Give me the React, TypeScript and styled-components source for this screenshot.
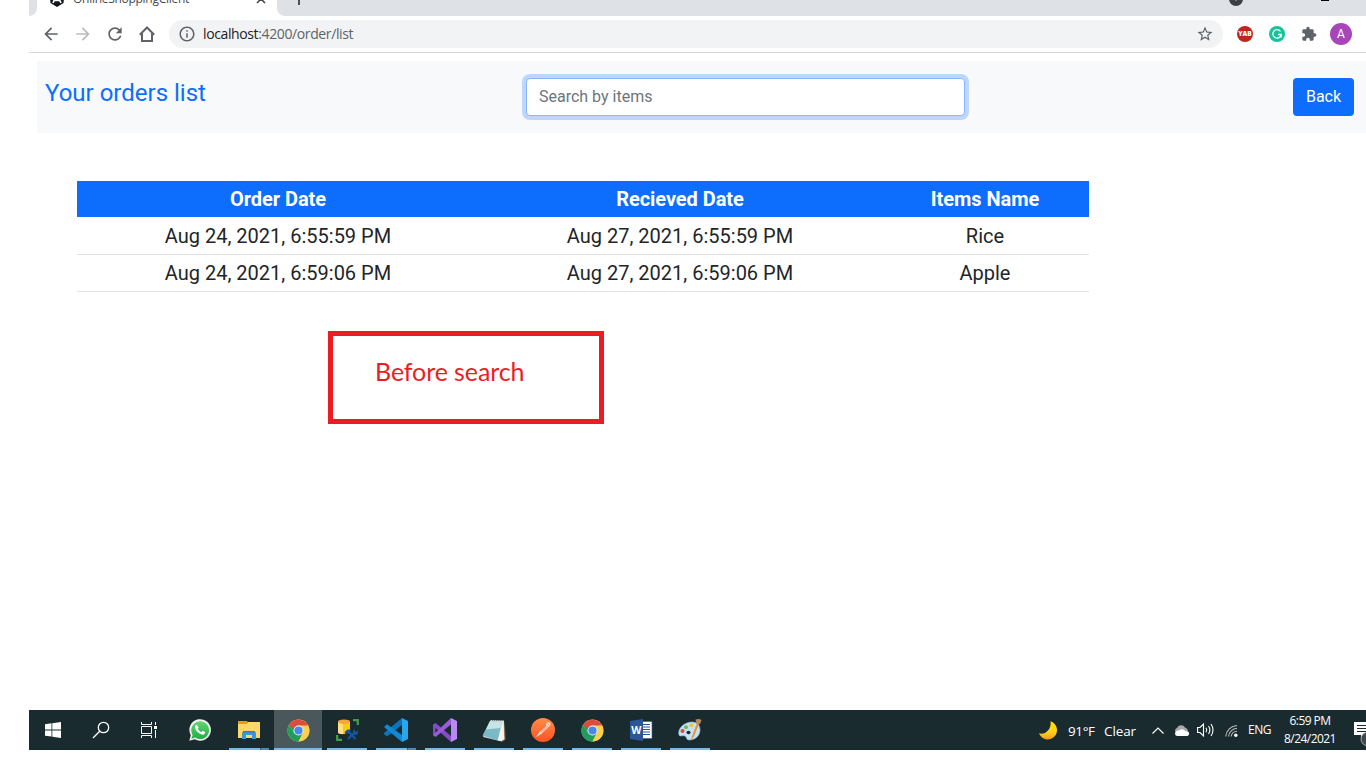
import React from "react";
import styled, { createGlobalStyle } from "styled-components";

const GlobalStyle = createGlobalStyle`
  *, *::before, *::after { box-sizing: border-box; }
  html, body { margin: 0; padding: 0; background: #fff; }
  body { width: 1366px; height: 768px; overflow: hidden; font-family: Roboto, sans-serif; color: #212529; }
  svg { display: block; flex: none; overflow: visible; }
`;

const uiFont = `"Open Sans", "Noto Sans", sans-serif`;

const Screen = styled.div`
  display: flex;
  flex-direction: column;
  width: 1366px;
  height: 768px;
  padding-left: 29px;
  overflow: hidden;
  background: #fff;
`;

/* ---------- browser chrome ---------- */

const TabStrip = styled.div`
  display: flex;
  align-items: flex-end;
  flex: none;
  height: 16px;
  overflow: hidden;
  background: #fff;
`;

const StripEdge = styled.div`
  width: 8px;
  height: 16px;
  background: #dee1e6;
  border-bottom-right-radius: 8px;
`;

const Tab = styled.div`
  display: flex;
  align-items: center;
  flex: none;
  width: 240px;
  height: 34px;
  padding: 0 10px 0 12px;
`;

const TabTitle = styled.span`
  flex: 1;
  margin-left: 8px;
  font: 12px/16px ${uiFont};
  letter-spacing: -0.28px;
  color: #45494d;
  white-space: nowrap;
`;

const StripRest = styled.div`
  display: flex;
  align-items: center;
  flex: 1;
  height: 34px;
  padding: 0 37px 0 15px;
  background: #dee1e6;
  border-bottom-left-radius: 8px;
`;

const Grow = styled.div`
  flex: 1;
`;

const TabSearch = styled.div`
  display: grid;
  place-items: center;
  width: 14px;
  height: 14px;
  margin-right: 78px;
  border-radius: 50%;
  background: #3c4043;
`;

const Minimize = styled.div`
  width: 8px;
  height: 1px;
  margin-top: 3px;
  background: #000;
`;

const Toolbar = styled.div`
  display: flex;
  align-items: center;
  flex: none;
  height: 37px;
  padding: 0 9px 0 6px;
  background: #fff;
  border-bottom: 1px solid #d8dade;
`;

const ToolCell = styled.div`
  display: grid;
  place-items: center;
  flex: none;
  width: 32px;
  height: 32px;
`;

const Omnibox = styled.div`
  display: flex;
  align-items: center;
  flex: 1;
  height: 28px;
  margin: 0 6px;
  padding: 0 9px;
  border-radius: 14px;
  background: #f1f3f4;
`;

const Url = styled.span`
  flex: 1;
  margin-left: 7px;
  font: 14px/20px ${uiFont};
  letter-spacing: -0.38px;
  color: #5f6368;
  b { font-weight: 400; color: #202124; }
`;

const Badge = styled.div<{ $size: number; $bg: string; $font: string }>`
  display: grid;
  place-items: center;
  width: ${(p) => p.$size}px;
  height: ${(p) => p.$size}px;
  border-radius: 50%;
  background: ${(p) => p.$bg};
  color: #fff;
  font: ${(p) => p.$font};
`;

/* ---------- page ---------- */

const Page = styled.main`
  display: flex;
  flex-direction: column;
  flex: none;
  height: 657px;
  padding: 8px 0 0 8px;
`;

const Navbar = styled.header`
  display: flex;
  align-items: flex-start;
  flex: none;
  height: 72px;
  padding: 17px 12px 0 8px;
  background: #f8f9fa;
`;

const PageTitle = styled.h1`
  width: 481px;
  margin: 0;
  font: 400 24px/31px Roboto, sans-serif;
  color: #0d6efd;
`;

const SearchInput = styled.input`
  width: 439px;
  height: 38px;
  padding: 0 12px 2px;
  border: 1px solid #86b7fe;
  border-radius: 4px;
  outline: 0;
  box-shadow: 0 0 0 4px rgba(13, 110, 253, 0.25);
  background: #fff;
  font: 16px/24px Roboto, sans-serif;
  &::placeholder { color: #6c757d; opacity: 1; }
`;

const BackButton = styled.button`
  width: 61px;
  height: 38px;
  margin-left: auto;
  padding: 0;
  border: 0;
  border-radius: 4px;
  background: #0d6efd;
  color: #fff;
  font: 16px/24px Roboto, sans-serif;
`;

const OrdersTable = styled.table`
  flex: none;
  width: 1012px;
  margin: 48px 0 0 40px;
  border-collapse: separate;
  border-spacing: 0;
  table-layout: fixed;
  font-size: 20px;
  line-height: 30px;
  text-align: center;
  th { height: 36px; padding: 0; background: #0d6efd; color: #fff; font-weight: 700; letter-spacing: -0.05px; }
  td { height: 37px; padding: 0; border-bottom: 1px solid #dee2e6; }
  tbody tr:first-child td { height: 38px; padding-top: 1px; }
`;

const Callout = styled.div`
  flex: none;
  width: 276px;
  height: 93px;
  margin: 39px 0 0 291px;
  padding: 19px 0 0 42px;
  border: 5px solid #ed1c24;
  font: 25px/32px Lato, sans-serif;
  letter-spacing: -0.1px;
  color: #ed1c24;
  white-space: nowrap;
`;

/* ---------- taskbar ---------- */

const Taskbar = styled.footer`
  display: flex;
  flex: none;
  height: 40px;
  background: #1a2b30;
  overflow: hidden;
`;

const TaskCell = styled.div<{ $active?: boolean }>`
  display: flex;
  flex-direction: column;
  align-items: center;
  flex: none;
  width: 48px;
  height: 40px;
  background: ${(p) => (p.$active ? "#4a585b" : "transparent")};
`;

const TaskIcon = styled.div`
  display: grid;
  place-items: center;
  flex: 1;
`;

const AppGroup = styled.div`
  display: flex;
  gap: 1px;
  margin-left: 3px;
  ${TaskCell} { padding-top: 2px; }
`;

const Indicator = styled.div<{ $kind?: "single" | "stacked" | "full" }>`
  flex: none;
  width: ${(p) => (p.$kind === "full" ? 48 : 40)}px;
  height: 2px;
  background: ${(p) =>
    !p.$kind
      ? "transparent"
      : p.$kind === "stacked"
        ? "linear-gradient(to right, #76b9ed 31px, #3c5d72 31px, #3c5d72 32px, #5287ae 32px)"
        : "#76b9ed"};
`;

const Tray = styled.div`
  display: flex;
  align-items: center;
  flex: none;
  width: 327px;
  margin-left: auto;
  color: #fff;
  font: 13px/18px ${uiFont};
  white-space: nowrap;
`;

const TrayText = styled.span<{ $width: number; $gap: number; $size?: number; $track?: number }>`
  flex: none;
  width: ${(p) => p.$width}px;
  margin-left: ${(p) => p.$gap}px;
  padding-top: ${(p) => (p.$size ? 0 : 2)}px;
  font-size: ${(p) => p.$size ?? 13.5}px;
  letter-spacing: ${(p) => p.$track ?? -0.1}px;
`;

const TrayIcon = styled.span<{ $gap: number }>`
  flex: none;
  margin-left: ${(p) => p.$gap}px;
`;

const Clock = styled.div`
  flex: none;
  width: 54px;
  margin-left: 11px;
  font-size: 12px;
  line-height: 18px;
  letter-spacing: -0.55px;
  text-align: center;
`;

const Glyph = ({ d, size = 20, color = "#5f6368" }: { d: string; size?: number; color?: string }) => (
  <svg width={size} height={size} viewBox="0 0 24 24" fill={color}>
    <path d={d} />
  </svg>
);

const paths = {
  back: "M20 11H7.83l5.59-5.59L12 4l-8 8 8 8 1.41-1.41L7.83 13H20v-2z",
  forward: "M4 11h12.17l-5.59-5.59L12 4l8 8-8 8-1.41-1.41L16.17 13H4v-2z",
  reload:
    "M17.65 6.35C16.2 4.9 14.21 4 12 4c-4.42 0-7.99 3.58-7.99 8s3.57 8 7.99 8c3.73 0 6.84-2.55 7.73-6h-2.08c-.82 2.33-3.04 4-5.65 4-3.31 0-6-2.69-6-6s2.69-6 6-6c1.66 0 3.14.69 4.22 1.78L13 11h7V4l-2.35 2.35z",
  info: "M11 7h2v2h-2zm0 4h2v6h-2zm1-9C6.48 2 2 6.48 2 12s4.48 10 10 10 10-4.480 10-10S17.520 2 12 2zm0 18c-4.410 0-8-3.590-8-8s3.590-8 8-8 8 3.590 8 8-3.590 8-8 8z",
  star: "M22 9.240l-7.190-.62L12 2 9.190 8.630 2 9.240l5.460 4.730L5.820 21 12 17.270 18.180 21l-1.630-7.030L22 9.240zM12 15.400l-3.760 2.270 1-4.280-3.320-2.880 4.380-.38L12 6.100l1.710 4.040 4.380.38-3.320 2.880 1 4.280L12 15.400z",
  puzzle:
    "M20.500 11H19V7c0-1.100-.9-2-2-2h-4V3.500C13 2.120 11.880 1 10.500 1S8 2.120 8 3.500V5H4c-1.100 0-1.990.9-1.990 2v3.800H3.500c1.490 0 2.700 1.210 2.700 2.700s-1.210 2.700-2.700 2.700H2V20c0 1.100.9 2 2 2h3.800v-1.500c0-1.490 1.210-2.700 2.700-2.700 1.490 0 2.700 1.210 2.700 2.700V22H17c1.100 0 2-.9 2-2v-4h1.500c1.380 0 2.500-1.120 2.500-2.500S21.880 11 20.500 11z",
};

const HomeIcon = () => (
  <svg width="16" height="16" viewBox="0 0 16 16" fill="none" stroke="#5f6368" strokeWidth="2">
    <path d="M.8 8.800 8 1.500l7.200 7.300M3 7.500V15h10V7.500" />
  </svg>
);

const Favicon = () => (
  <svg width="16" height="16" viewBox="0 0 16 16">
    <path d="M8 0 15.500 3 14.500 12 8 16 1.500 12 .5 3z" fill="#11151c" />
    <path d="M4 12 8 3l4 9M5.500 9.500h5" fill="none" stroke="#fff" strokeWidth="1.700" />
  </svg>
);

const WindowsLogo = () => (
  <svg width="16" height="16" viewBox="0 0 16 16" fill="#fff">
    <path d="M0 2.200 6.500 1.300v6.200H0zM7.300 1.200 16 0v7.500H7.300zM0 8.400h6.500v6.200L0 13.700zM7.300 8.400H16V16l-8.700-1.200z" />
  </svg>
);

const SearchGlyph = () => (
  <svg width="18" height="18" viewBox="0 0 18 18" fill="none" stroke="#fff" strokeWidth="1.300">
    <circle cx="11.500" cy="6.500" r="5.200" />
    <path d="M7.700 10.300 1 17" />
  </svg>
);

const TaskViewGlyph = () => (
  <svg width="16" height="16" viewBox="0 0 16 16" fill="none" stroke="#fff" strokeWidth="1">
    <path d="M.5 0v2.500h10V0M.5 16v-2.500h10V16M.5 4.500h10v7H.5zM14.500 0v3M14.500 8v8" />
    <path d="M13 4h3v3h-3z" fill="#fff" stroke="none" />
  </svg>
);

const WhatsApp = () => (
  <svg width="22" height="22" viewBox="0 0 22 22">
    <defs>
      <linearGradient id="wa" x1="0" y1="0" x2="0" y2="1">
        <stop offset="0" stopColor="#62d66e" />
        <stop offset="1" stopColor="#23ad48" />
      </linearGradient>
    </defs>
    <path d="M.3 21.800 1.800 16.300A10.800 10.800 0 1 1 5.800 20.300z" fill="#eef3ef" />
    <path d="M2.400 19.700 3.600 15.900A8.900 8.900 0 1 1 6.200 18.600z" fill="url(#wa)" />
    <path
      d="M7.600 5.800c-1.300.3-2 1.700-1.500 3.300.9 3 3.600 5.700 6.700 6.500 1.800.4 3.400-.5 3.300-2.500l-2.400-1.300-1.300 1.400c-1.700-.7-3-2-3.700-3.500l1-1.300z"
      fill="#fff"
    />
  </svg>
);

const Explorer = () => (
  <svg width="22" height="18" viewBox="0 0 22 18">
    <path d="M0 0h9l1 1.500V4H0z" fill="#e2a10b" />
    <path d="M0 3h9l1-2h12v16H0z" fill="#ffd869" />
    <path d="M4 18v-6l1.500-2h11l1.500 2v6h-4v-4H8v4z" fill="#3f97d7" />
    <path d="M5 10h12v1.500H5z" fill="#2f80bd" />
  </svg>
);

const Chrome = () => (
  <svg width="23" height="23" viewBox="0 0 48 48">
    <circle cx="24" cy="24" r="23" fill="#fcd04c" />
    <path d="M4.080 12.500A23 23 0 0 0 24 47L33.100 29.250 24 24 14.900 29.250z" fill="#1f9d5c" />
    <path d="M24 13.500h20A23 23 0 0 1 24 47l9.100-17.750z" fill="#fcd04c" />
    <path d="M4.080 12.500 14.900 29.250 24 24V13.500z" fill="#1f9d5c" />
    <path d="M4.080 12.500A23 23 0 0 1 44 13.500H24A10.500 10.500 0 0 0 13.800 22z" fill="#db4b3f" />
    <circle cx="24" cy="24" r="10.500" fill="#f1f1f1" />
    <circle cx="24" cy="24" r="8.500" fill="#4688f1" />
  </svg>
);

const DatabaseTool = () => (
  <svg width="23" height="22" viewBox="0 0 23 22">
    <path d="M2 2.500v11c0 1 3 2 6.500 1.500l5.500-3v-9.500z" fill="#fdc90c" />
    <path d="M2 2.500v11c0 1 3 1.500 5 1.500V4z" fill="#ffe27a" />
    <ellipse cx="8" cy="2.700" rx="6" ry="2.300" fill="#f4a63b" />
    <path d="M17 1.200h4.800V6M1.200 16v4.800H6" fill="none" stroke="#43a047" strokeWidth="2.200" />
    <path d="m12 20 6-6m-5-1 6.500 7" fill="none" stroke="#12599c" strokeWidth="2.200" />
    <path d="m8.500 13 3-2.500h3.500l-2.500 4.500-1.500-1-1.500 1zM17 12l2-2v2.500l1.500.5 1.500-2v3.500L20 16h-3z" fill="#12599c" />
  </svg>
);

const VsCode = () => (
  <svg width="24" height="24" viewBox="0 0 24 24">
    <path d="M18 0v7L3 18.500 0 16V15z" fill="#0a74bd" />
    <path d="M0 9 3 6.200 18 17v7L0 9z" fill="#1089d4" />
    <path d="M18 0l6 3v18l-6 3z" fill="#28a6ef" />
  </svg>
);

const VisualStudio = () => (
  <svg width="24" height="24" viewBox="0 0 24 24">
    <path d="M0 6.500 2.500 5l15.500 13v6L2.500 10v8L0 17z" fill="#854cc7" />
    <path d="M0 17 18 0v6.500L2.500 19z" fill="#9a5bd8" />
    <path d="M18 0l6 3v18l-6 3z" fill="#b888f3" />
  </svg>
);

const Notepad = () => (
  <svg width="24" height="23" viewBox="0 0 24 23">
    <path d="m9 1 13 .5 1 19-3 2L1 18z" fill="#d7dad6" />
    <path d="M8 2 20 3l-4.500 18.500L.5 16.500z" fill="#7bb9c5" />
    <path d="M8 2 20 3l-1.500 6L4 10.500z" fill="#c7e3e5" />
    <path d="m21 2 1.500 18.500-3 1.500-3.500-.5L20.500 3z" fill="#f4f4ef" />
    <path d="m22.500 8 .5 12.500-3 1.500" fill="none" stroke="#8c6b45" />
    <path d="M8 1.500h13" stroke="#777" strokeDasharray="1 1" />
  </svg>
);

const Postman = () => (
  <svg width="24" height="24" viewBox="0 0 24 24">
    <defs>
      <linearGradient id="pm" x1="0" y1="0" x2="0" y2="1">
        <stop offset="0" stopColor="#ff8c45" />
        <stop offset="1" stopColor="#ff5325" />
      </linearGradient>
    </defs>
    <circle cx="12" cy="12" r="12" fill="url(#pm)" />
    <path d="m5 19 3.500-5 7-6 1.500 1.500-7 6.500z" fill="#ffe6da" />
    <circle cx="17.300" cy="6.500" r="2.200" fill="#ffe6da" />
    <path d="m10 14 5.500-4.500M16.500 5.500l2 2" stroke="#ff7138" strokeWidth=".8" />
  </svg>
);

const WordApp = () => (
  <svg width="22" height="22" viewBox="0 0 22 22">
    <path d="M12 2.500h10v17H12z" fill="#fff" stroke="#2b579a" strokeWidth=".6" />
    <path d="M13 5.500h7M13 8h7M13 10.500h7M13 13h7M13 15.500h7" stroke="#2b579a" strokeWidth="1.100" />
    <path d="M0 2 13 0v22L0 20z" fill="#2b579a" />
    <text x="6.300" y="15" textAnchor="middle" fill="#fff" fontFamily="Open Sans, sans-serif" fontSize="10.500" fontWeight="700">
      W
    </text>
  </svg>
);

const PaintApp = () => (
  <svg width="24" height="24" viewBox="0 0 24 24">
    <path
      d="M1 17C-1 11 6 4 14 4c5 0 8 3 8 8 0 6-5 10-11 10-3 0-2-3-4-4s-5 1-6-1z"
      fill="#c4e2f3"
      stroke="#8dbad3"
      strokeWidth=".6"
    />
    <ellipse cx="10.500" cy="14.500" rx="2" ry="1.700" fill="#1a2b30" />
    <circle cx="4.500" cy="13" r="2" fill="#e0483e" />
    <circle cx="8" cy="9.200" r="1.900" fill="#73b843" />
    <circle cx="13.500" cy="7.300" r="1.900" fill="#f1c232" />
    <path d="m12.500 23 2-6 4.500-12 2 .8-5 12.700z" fill="#e89432" />
    <path d="m18 4-.5-2.500L21 1l2.500 1-1 3-2 2z" fill="#b88a5b" />
  </svg>
);

const Moon = () => (
  <svg width="18" height="18" viewBox="0 0 18 18">
    <defs>
      <linearGradient id="moon" x1="0" y1="0" x2="0" y2="1">
        <stop offset="0" stopColor="#ffe500" />
        <stop offset=".6" stopColor="#ffd21c" />
        <stop offset="1" stopColor="#f79b16" />
      </linearGradient>
    </defs>
    <path d="M11.500.2A9.300 9.300 0 1 1 0 12.300C5 14.500 13 9 11.500.2z" fill="url(#moon)" />
  </svg>
);

const apps: { icon: React.ReactNode; kind?: "single" | "stacked" | "full" }[] = [
  { icon: <WhatsApp /> },
  { icon: <Explorer />, kind: "stacked" },
  { icon: <Chrome />, kind: "full" },
  { icon: <DatabaseTool />, kind: "single" },
  { icon: <VsCode />, kind: "stacked" },
  { icon: <VisualStudio />, kind: "single" },
  { icon: <Notepad />, kind: "single" },
  { icon: <Postman />, kind: "single" },
  { icon: <Chrome />, kind: "single" },
  { icon: <WordApp />, kind: "single" },
  { icon: <PaintApp />, kind: "single" },
];

const orders = [
  ["Aug 24, 2021, 6:55:59 PM", "Aug 27, 2021, 6:55:59 PM", "Rice"],
  ["Aug 24, 2021, 6:59:06 PM", "Aug 27, 2021, 6:59:06 PM", "Apple"],
];

export default function App() {
  return (
    <Screen>
      <GlobalStyle />
      <TabStrip>
        <StripEdge />
        <Tab>
          <Favicon />
          <TabTitle>OnlineShoppingClient</TabTitle>
          <svg width="12" height="12" viewBox="0 0 12 12" stroke="#45494d" strokeWidth="1.600">
            <path d="m2 2 8 8m0-8-8 8" />
          </svg>
        </Tab>
        <StripRest>
          <svg width="14" height="14" viewBox="0 0 14 14" stroke="#3c4043" strokeWidth="1.800">
            <path d="M7 1v12M1 7h12" />
          </svg>
          <Grow />
          <TabSearch>
            <svg width="6" height="4" viewBox="0 0 6 4" fill="#dee1e6">
              <path d="M0 0h6L3 4z" />
            </svg>
          </TabSearch>
          <Minimize />
        </StripRest>
      </TabStrip>

      <Toolbar>
        <ToolCell><Glyph d={paths.back} size={20} /></ToolCell>
        <ToolCell><Glyph d={paths.forward} size={20} color="#babcbe" /></ToolCell>
        <ToolCell><Glyph d={paths.reload} size={20} /></ToolCell>
        <ToolCell><HomeIcon /></ToolCell>
        <Omnibox>
          <Glyph d={paths.info} size={18} />
          <Url><b>localhost</b>:4200/order/list</Url>
          <Glyph d={paths.star} size={18} />
        </Omnibox>
        <ToolCell>
          <Badge $size={16} $bg="#c5221f" $font={`800 6.5px/16px ${uiFont}`}>YAB</Badge>
        </ToolCell>
        <ToolCell>
          <Badge $size={16} $bg="#15c39a" $font={`700 11px/16px ${uiFont}`}>
            <svg width="10" height="10" viewBox="0 0 10 10" fill="none" stroke="#fff" strokeWidth="1.300">
              <path d="M8.500 2.500A4.200 4.200 0 1 0 9.200 5.500H6M9.200 5.500v3" />
            </svg>
          </Badge>
        </ToolCell>
        <ToolCell><Glyph d={paths.puzzle} size={16} /></ToolCell>
        <ToolCell>
          <Badge $size={22} $bg="#a845b9" $font="400 12px/22px Roboto, sans-serif">A</Badge>
        </ToolCell>
      </Toolbar>

      <Page>
        <Navbar>
          <PageTitle>Your orders list</PageTitle>
          <SearchInput placeholder="Search by items" />
          <BackButton>Back</BackButton>
        </Navbar>
        <OrdersTable>
          <colgroup>
            <col width="402" />
            <col width="402" />
            <col width="208" />
          </colgroup>
          <thead>
            <tr>
              <th>Order Date</th>
              <th>Recieved Date</th>
              <th>Items Name</th>
            </tr>
          </thead>
          <tbody>
            {orders.map((row) => (
              <tr key={row[0]}>
                {row.map((cell) => (
                  <td key={cell}>{cell}</td>
                ))}
              </tr>
            ))}
          </tbody>
        </OrdersTable>
        <Callout>Before search</Callout>
      </Page>

      <Taskbar>
        <TaskCell><TaskIcon><WindowsLogo /></TaskIcon></TaskCell>
        <TaskCell><TaskIcon><SearchGlyph /></TaskIcon></TaskCell>
        <TaskCell><TaskIcon><TaskViewGlyph /></TaskIcon></TaskCell>
        <AppGroup>
          {apps.map((app, i) => (
            <TaskCell key={i} $active={app.kind === "full"}>
              <TaskIcon>{app.icon}</TaskIcon>
              <Indicator $kind={app.kind} />
            </TaskCell>
          ))}
        </AppGroup>
        <Tray>
          <Moon />
          <TrayText $gap={11} $width={27} $track={-0.4}>91°F</TrayText>
          <TrayText $gap={9} $width={32}>Clear</TrayText>
          <TrayIcon $gap={16}>
            <svg width="12" height="7" viewBox="0 0 12 7" fill="none" stroke="#fff" strokeWidth="1.200">
              <path d="M.5 6.500 6 1l5.500 5.500" />
            </svg>
          </TrayIcon>
          <TrayIcon $gap={10}>
            <svg width="16" height="11" viewBox="0 0 16 11">
              <path d="M1.500 7A3 3 0 0 1 3 3 4.500 4.500 0 0 1 11 2.500 4 4 0 0 1 14 6z" fill="#a5abad" />
              <path d="M3 11A2.700 2.700 0 0 1 3 5.800Q5 6 6 4.800 9 3 11.500 6.200A2.500 2.500 0 1 1 13.500 11z" fill="#fff" />
            </svg>
          </TrayIcon>
          <TrayIcon $gap={7}>
            <svg width="17" height="14" viewBox="0 0 17 14" fill="none" stroke="#fff" strokeWidth="1.100">
              <path d="M.6 4.500H3L6.500 1v12L3 9.500H.6zM9 4.800q1.500 2.200 0 4.400M11.500 3q2.800 4 0 8M14 1q4 6 0 12" />
            </svg>
          </TrayIcon>
          <TrayIcon $gap={11}>
            <svg width="13" height="13" viewBox="0 0 13 13" fill="none" stroke="#b5bcbe" strokeWidth="1.100">
              <path d="M.7 12.500A12 12 0 0 1 12 1.500M3.500 12.500A9 9 0 0 1 12 4.300M6.200 12.500A6 6 0 0 1 12 7.200" />
              <circle cx="10.800" cy="11.200" r="1.700" fill="#fff" stroke="none" />
            </svg>
          </TrayIcon>
          <TrayText $gap={10} $width={24} $size={12} $track={-0.5}>ENG</TrayText>
          <Clock>
            <div>6:59 PM</div>
            <div>8/24/2021</div>
          </Clock>
          <TrayIcon $gap={17}>
            <svg width="16" height="16" viewBox="0 0 16 16">
              <path d="M0 0h16v13H9l-2 3v-3H0z" fill="#fff" />
              <path d="M3 3.500h13M3 6.500h13M3 9.500h9" stroke="#1a2b30" strokeWidth="1.100" />
              <circle cx="14" cy="17" r="7" fill="#43484b" stroke="#b9bdbf" strokeWidth=".8" />
            </svg>
          </TrayIcon>
        </Tray>
      </Taskbar>
    </Screen>
  );
}
